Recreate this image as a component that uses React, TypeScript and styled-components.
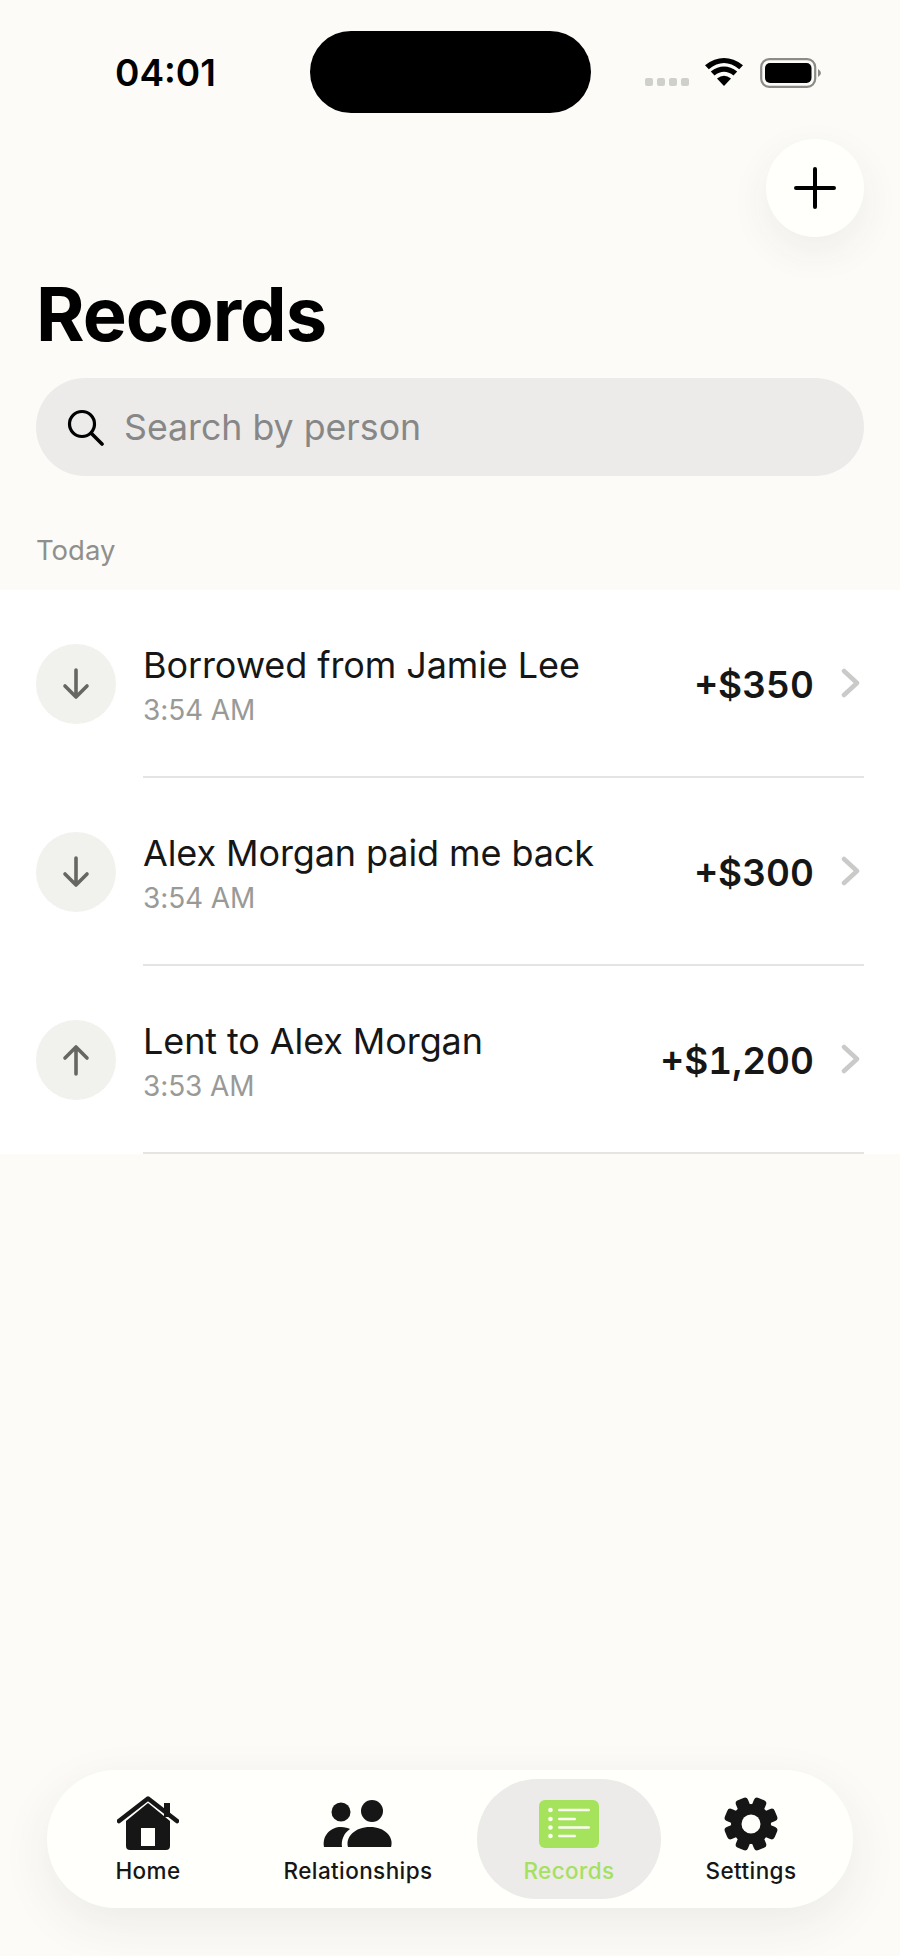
import React from 'react';
import styled, { createGlobalStyle } from 'styled-components';

const GlobalStyle = createGlobalStyle`
  html, body {
    margin: 0;
    padding: 0;
    background: #fcfbf8;
  }
  * {
    box-sizing: border-box;
  }
`;

const Screen = styled.div`
  width: 900px;
  height: 1956px;
  display: flex;
  flex-direction: column;
  overflow: hidden;
  background: #fcfbf8;
  font-family: Inter, "Liberation Sans", sans-serif;
  color: #161616;
`;

const StatusBar = styled.div`
  height: 113px;
  padding: 31px 0 0 115px;
  display: flex;
  align-items: flex-start;
`;

const Clock = styled.div`
  width: 195px;
  padding-top: 20px;
  font-size: 37px;
  line-height: 44px;
  font-weight: 600;
  color: #000;
`;

const Island = styled.div`
  width: 281px;
  height: 82px;
  border-radius: 41px;
  background: #000;
`;

const StatusIcons = styled.div`
  margin-left: 54px;
  display: flex;
  align-items: flex-start;
`;

const SignalDots = styled.div`
  display: flex;
  gap: 4px;
  margin-top: 47px;
`;

const SignalDot = styled.span`
  width: 8px;
  height: 8px;
  border-radius: 2px;
  background: #cfcfcc;
`;

const WifiIcon = styled.svg`
  width: 38px;
  height: 28px;
  margin: 27px 0 0 16px;
`;

const BatteryIcon = styled.svg`
  width: 62px;
  height: 30px;
  margin: 27px 0 0 17px;
`;

const ActionRow = styled.div`
  display: flex;
  justify-content: flex-end;
  padding: 26px 36px 0;
`;

const AddButton = styled.button`
  width: 98px;
  height: 98px;
  padding: 0;
  border: none;
  border-radius: 50%;
  background: #fffffc;
  box-shadow: 0 14px 40px rgba(60, 55, 40, 0.07);
  display: flex;
  align-items: center;
  justify-content: center;
`;

const Title = styled.h1`
  margin: 33px 0 0;
  padding: 0 36px;
  font-size: 74px;
  line-height: 88px;
  font-weight: 700;
  letter-spacing: -1px;
  color: #000;
`;

const SearchBar = styled.div`
  margin: 20px 36px 0;
  height: 98px;
  border-radius: 49px;
  background: #ecebea;
  display: flex;
  align-items: center;
  padding-left: 31px;
  gap: 20px;
`;

const SearchText = styled.span`
  font-size: 35.7px;
  color: #878787;
`;

const SectionLabel = styled.div`
  margin: 56px 0 0;
  padding: 0 36px;
  height: 58px;
  font-size: 27.5px;
  line-height: 36px;
  color: #8f908c;
`;

const List = styled.div`
  background: #fff;
`;

const Row = styled.div`
  height: 188px;
  padding: 0 36px;
  display: flex;
  align-items: center;
`;

const Avatar = styled.div`
  flex: none;
  width: 80px;
  height: 80px;
  border-radius: 50%;
  background: #f1f1ee;
  display: flex;
  align-items: center;
  justify-content: center;
`;

const RowBody = styled.div`
  flex: 1;
  height: 100%;
  margin-left: 27px;
  display: flex;
  align-items: center;
  border-bottom: 2px solid #e4e4e2;
`;

const RowText = styled.div`
  flex: 1;
  display: flex;
  flex-direction: column;
  margin-top: 3px;
`;

const RowTitle = styled.div`
  font-size: 36px;
  line-height: 46px;
  letter-spacing: -0.1px;
  color: #161616;
`;

const RowTime = styled.div`
  margin-top: 4px;
  font-size: 28px;
  line-height: 36px;
  letter-spacing: -0.1px;
  color: #999a97;
`;

const Amount = styled.div`
  margin-top: 2px;
  font-size: 37px;
  font-weight: 600;
  font-variant-numeric: tabular-nums;
  color: #161616;
`;

const ChevronIcon = styled.svg`
  width: 20px;
  height: 30px;
  margin-left: 27px;
  margin-right: 3px;
`;

const BottomNav = styled.nav`
  margin: auto 47px 48px;
  height: 138px;
  border-radius: 69px;
  background: #fffffb;
  box-shadow: 0 16px 50px rgba(60, 55, 40, 0.08);
  display: grid;
  grid-template-columns: 202px 218px 194px 180px;
  align-items: center;
`;

const NavItem = styled.div<{ $active?: boolean }>`
  height: 120px;
  padding-top: 17px;
  margin-left: ${p => (p.$active ? '10px' : '0')};
  border-radius: 60px;
  background: ${p => (p.$active ? '#ecebea' : 'transparent')};
  display: flex;
  flex-direction: column;
  align-items: center;
  color: ${p => (p.$active ? '#a6e05f' : '#161616')};
`;

const NavIconSlot = styled.div`
  height: 56px;
  display: flex;
  align-items: center;
  justify-content: center;
`;

const NavLabel = styled.span`
  margin-top: 5px;
  font-size: 22.5px;
  line-height: 28px;
  font-weight: 450;
  letter-spacing: 0.4px;
`;

const HomeGlyph = () => (
  <svg width="62" height="56" viewBox="0 0 62 56">
    <path fillRule="evenodd" fill="#161616" d="M9 25 L31 7 L53 25 V50 Q53 54 49 54 H13 Q9 54 9 50 Z M24 32 V50 H38 V32 Z" />
    <path d="M2 25 L31 2.5 L60 25" fill="none" stroke="#161616" strokeWidth="4.5" strokeLinecap="round" strokeLinejoin="round" />
    <rect x="47" y="7" width="6" height="14" fill="#161616" />
  </svg>
);

const PeopleGlyph = () => (
  <svg width="72" height="50" viewBox="0 0 72 50">
    <circle cx="19" cy="13" r="9.5" fill="#161616" />
    <circle cx="50" cy="12" r="11" fill="#161616" />
    <path fill="#161616" d="M2 48 C0 36 9 28 19 28 C23 28 26 29 28 30 C22 34 19 41 20 48 Z" />
    <path fill="#161616" d="M26 48 C23 38 33 28 48 28 C63 28 72 38 69 48 Z" />
  </svg>
);

const RecordsGlyph = () => (
  <svg width="60" height="48" viewBox="0 0 60 48">
    <rect width="60" height="48" rx="6" fill="#a6e35c" />
    {[10, 19, 27.5, 36].map((y, i) => (
      <React.Fragment key={y}>
        <circle cx="11.5" cy={y} r="2.3" fill="#fbfdf2" />
        <rect x="19" y={y - 1.3} width={i % 2 ? 18 : 32} height="2.6" rx="1.3" fill="#fbfdf2" />
      </React.Fragment>
    ))}
  </svg>
);

const GearGlyph = () => (
  <svg width="56" height="56" viewBox="0 0 56 56">
    {[0, 45, 90, 135, 180, 225, 270, 315].map(a => (
      <rect key={a} x="21.5" y="1" width="13" height="14" rx="3.5" fill="#161616" transform={`rotate(${a + 22.5} 28 28)`} />
    ))}
    <circle cx="28" cy="28" r="20" fill="#161616" />
    <circle cx="28" cy="28" r="9.5" fill="#fffffb" />
  </svg>
);

const ArrowGlyph = ({ up }: { up?: boolean }) => (
  <svg width="28" height="32" viewBox="0 0 28 32">
    <path
      d={up ? 'M14 30 V3 M3 14 L14 3 L25 14' : 'M14 2 V29 M3 18 L14 29 L25 18'}
      fill="none"
      stroke="#666763"
      strokeWidth="3.6"
      strokeLinecap="round"
      strokeLinejoin="round"
    />
  </svg>
);

const records = [
  { title: 'Borrowed from Jamie Lee', time: '3:54 AM', amount: '+$350' },
  { title: 'Alex Morgan paid me back', time: '3:54 AM', amount: '+$300' },
  { title: 'Lent to Alex Morgan', time: '3:53 AM', amount: '+$1,200', up: true },
];

const App = () => {
  return (
    <Screen>
      <GlobalStyle />
      <StatusBar>
        <Clock>04:01</Clock>
        <Island />
        <StatusIcons>
          <SignalDots>
            <SignalDot />
            <SignalDot />
            <SignalDot />
            <SignalDot />
          </SignalDots>
          <WifiIcon viewBox="0 0 38 28">
            <path fill="#000" d="M19 28 L12 20.5 Q19 15 26 20.5 Z" />
            <path fill="#000" d="M9.5 17.5 L5.8 13.6 Q19 3.5 32.2 13.6 L28.5 17.5 Q19 10 9.5 17.5 Z" />
            <path fill="#000" d="M3.8 11.2 L0 7.2 Q19 -7 38 7.2 L34.2 11.2 Q19 -1 3.8 11.2 Z" />
          </WifiIcon>
          <BatteryIcon viewBox="0 0 62 30">
            <rect x="1.2" y="1.2" width="54" height="27.6" rx="8" fill="none" stroke="#8b8b88" strokeWidth="2.2" />
            <rect x="5" y="5" width="46.5" height="20" rx="5" fill="#000" />
            <path d="M58 11 Q61 13 61 15 Q61 17 58 19 Z" fill="#8b8b88" />
          </BatteryIcon>
        </StatusIcons>
      </StatusBar>

      <ActionRow>
        <AddButton aria-label="Add">
          <svg width="42" height="42" viewBox="0 0 42 42">
            <path d="M21 2 V40 M2 21 H40" stroke="#000" strokeWidth="4" strokeLinecap="round" />
          </svg>
        </AddButton>
      </ActionRow>

      <Title>Records</Title>

      <SearchBar>
        <svg width="37" height="37" viewBox="0 0 37 37">
          <circle cx="15" cy="15" r="12.5" fill="none" stroke="#000" strokeWidth="3.2" />
          <path d="M24.5 24.5 L35 35" stroke="#000" strokeWidth="3.6" strokeLinecap="round" />
        </svg>
        <SearchText>Search by person</SearchText>
      </SearchBar>

      <SectionLabel>Today</SectionLabel>

      <List>
        {records.map(r => (
          <Row key={r.title}>
            <Avatar>
              <ArrowGlyph up={r.up} />
            </Avatar>
            <RowBody>
              <RowText>
                <RowTitle>{r.title}</RowTitle>
                <RowTime>{r.time}</RowTime>
              </RowText>
              <Amount>{r.amount}</Amount>
              <ChevronIcon viewBox="0 0 20 30">
                <path d="M3 3 L16 15 L3 27" fill="none" stroke="#cacac8" strokeWidth="4.5" strokeLinecap="round" strokeLinejoin="round" />
              </ChevronIcon>
            </RowBody>
          </Row>
        ))}
      </List>

      <BottomNav>
        <NavItem>
          <NavIconSlot><HomeGlyph /></NavIconSlot>
          <NavLabel>Home</NavLabel>
        </NavItem>
        <NavItem>
          <NavIconSlot><PeopleGlyph /></NavIconSlot>
          <NavLabel>Relationships</NavLabel>
        </NavItem>
        <NavItem $active>
          <NavIconSlot><RecordsGlyph /></NavIconSlot>
          <NavLabel>Records</NavLabel>
        </NavItem>
        <NavItem>
          <NavIconSlot><GearGlyph /></NavIconSlot>
          <NavLabel>Settings</NavLabel>
        </NavItem>
      </BottomNav>
    </Screen>
  );
};

export default App;
